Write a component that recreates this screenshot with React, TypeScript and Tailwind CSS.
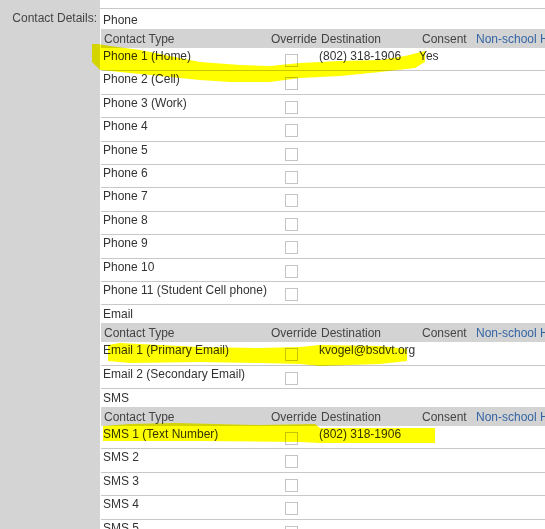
import React from 'react';

interface ContactRow {
  type: string;
  dest?: string;
  consent?: string;
}

interface Section {
  title: string;
  titleCls: string;
  rows: ContactRow[];
}

const sections: Section[] = [
  {
    title: 'Phone',
    titleCls: 'h-[20px] pt-[4px]',
    rows: [
      { type: 'Phone 1 (Home)', dest: '(802) 318-1906', consent: 'Yes' },
      { type: 'Phone 2 (Cell)' },
      { type: 'Phone 3 (Work)' },
      { type: 'Phone 4' },
      { type: 'Phone 5' },
      { type: 'Phone 6' },
      { type: 'Phone 7' },
      { type: 'Phone 8' },
      { type: 'Phone 9' },
      { type: 'Phone 10' },
      { type: 'Phone 11 (Student Cell phone)' },
    ],
  },
  {
    title: 'Email',
    titleCls: 'h-[18px] pt-[1.5px]',
    rows: [
      { type: 'Email 1 (Primary Email)', dest: 'kvogel@bsdvt.org' },
      { type: 'Email 2 (Secondary Email)' },
    ],
  },
  {
    title: 'SMS',
    titleCls: 'h-[18px] pt-[1.5px]',
    rows: [
      { type: 'SMS 1 (Text Number)', dest: '(802) 318-1906' },
      { type: 'SMS 2' },
      { type: 'SMS 3' },
      { type: 'SMS 4' },
      { type: 'SMS 5' },
      { type: 'SMS 6' },
    ],
  },
];

function HeaderRow() {
  return (
    <div className="flex h-[19px] bg-[#d3d3d3] pt-[3px] text-[#444] whitespace-nowrap">
      <div className="w-[168px] shrink-0 pl-[3px]">Contact Type</div>
      <div className="w-[50px] shrink-0 pl-[2px]">Override</div>
      <div className="w-[100px] shrink-0 pl-[2px]">Destination</div>
      <div className="w-[55px] shrink-0 pl-[3px]">Consent</div>
      <div className="flex-1 pl-[2px] text-[#3465a4]">Non-school Hours</div>
    </div>
  );
}

function DataRow({ row }: { row: ContactRow }) {
  return (
    <div className="flex h-[23.4px] border-b border-[#c8c8c8] pt-[1px] text-[#333] whitespace-nowrap">
      <div className="w-[168px] shrink-0 pl-[2px]">{row.type}</div>
      <div className="w-[50px] shrink-0">
        <div className="ml-[16px] mt-[5px] h-[13px] w-[13px] border border-[#c4c4c4] bg-white" />
      </div>
      <div className="w-[100px] shrink-0">{row.dest}</div>
      <div className="w-[55px] shrink-0">{row.consent}</div>
      <div className="flex-1" />
    </div>
  );
}

// freehand highlighter marks over the rows
function Highlights() {
  return (
    <svg
      className="pointer-events-none absolute left-0 top-0 mix-blend-multiply"
      width={545}
      height={529}
      viewBox="0 0 545 529"
    >
      <g fill="#ffff00">
        <path d="M92 44 L98 44 L110 46 L140 50 L170 56 L200 62 L240 65 L270 66 L300 63 L340 61 L380 60 L405 56 L425 51 L425 62 L415 68 L380 72 L340 76 L300 78 L270 82 L230 82 L200 80 L160 76 L120 72 L100 70 L92 62 Z" />
        <path d="M108 345 L120 343 L200 347 L260 348 L300 347 L320 345 L380 346 L407 349 L407 361 L380 364 L320 366 L300 364 L260 363 L200 362 L130 363 L108 361 Z" />
        <path d="M103 426 L130 424 L175 423 L260 425 L315 424 L320 428 L435 428 L435 443 L320 443 L300 442 L200 441 L103 441 Z" />
      </g>
    </svg>
  );
}

export default function App() {
  return (
    <div className="relative flex h-[529px] w-[545px] overflow-hidden bg-white font-['Liberation_Sans',Arial,sans-serif] text-[12px] leading-[14px]">
      <div className="w-[100px] shrink-0 bg-[#d4d4d4] pr-[3px] pt-[11px] text-right leading-[15px] text-[#444]">
        Contact Details:
      </div>
      <div className="min-w-0 flex-1 overflow-hidden pt-[8px]">
        <div className="border-t border-[#c8c8c8] pl-[1px]">
          {sections.map(section => (
            <div key={section.title}>
              <div className={`${section.titleCls} pl-[2px] text-[#333]`}>{section.title}</div>
              <HeaderRow />
              {section.rows.map(row => (
                <DataRow key={row.type} row={row} />
              ))}
            </div>
          ))}
        </div>
      </div>
      <Highlights />
    </div>
  );
}
